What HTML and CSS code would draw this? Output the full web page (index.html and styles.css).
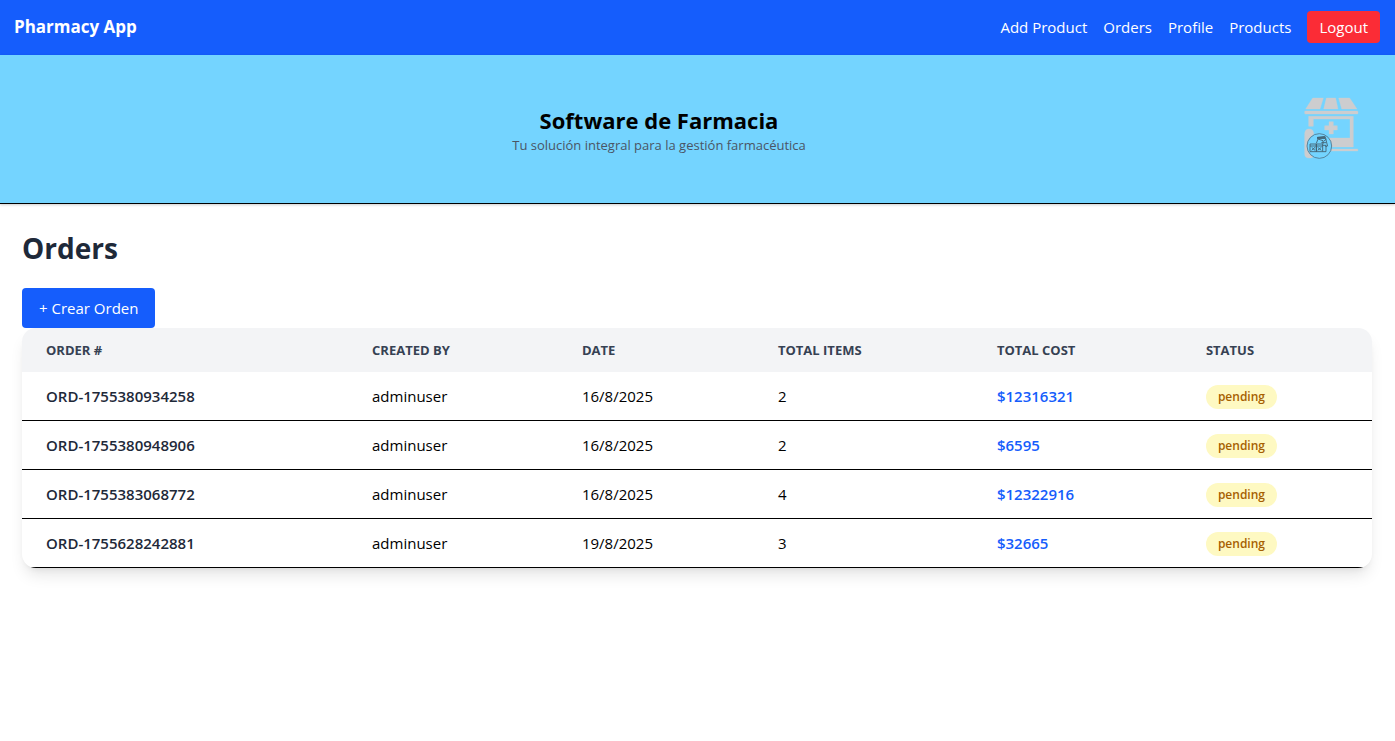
FILE: index.html
```html
<!DOCTYPE html>
<html lang="es">
<head>
<meta charset="utf-8">
<meta name="viewport" content="width=device-width, initial-scale=1">
<title>Pharmacy App</title>
<link rel="stylesheet" href="styles.css">
</head>
<body>
<nav class="navbar">
  <a class="brand" href="#">Pharmacy App</a>
  <div class="nav-links">
    <a href="#">Add Product</a>
    <a href="#">Orders</a>
    <a href="#">Profile</a>
    <a href="#">Products</a>
    <button class="logout" type="button">Logout</button>
  </div>
</nav>
<header class="banner">
  <div class="banner-text">
    <h2>Software de Farmacia</h2>
    <p>Tu solución integral para la gestión farmacéutica</p>
  </div>
  <svg class="logo" viewBox="12 24 207 210" role="img" aria-label="Farmacia">
    <g fill="#cdcdcf" stroke="#cdcdcf" stroke-width="1" stroke-linejoin="round">
      <path d="M68 39H100L90 72H47ZM109 39H137L144 72H101ZM146 39H179L201 72H155Z"/>
      <rect x="44" y="78" width="160" height="9" rx="2"/>
      <path fill-rule="evenodd" d="M56 94H190V186H118V159H180V102H70V124H56Z"/>
      <path d="M117 110H130V122H142V135H130V147H117V135H104V122H117Z"/>
      <rect x="110" y="192" width="94" height="6" rx="2"/>
      <path d="M44 148Q44 132 57 132Q70 132 71 145V148L56 162V200L71 213Q70 219 57 219Q44 219 44 206Z"/>
    </g>
    <circle cx="88" cy="183" r="37" fill="#73d4ff" stroke="#50758a" stroke-width="2.5"/>
    <g fill="none" stroke="#3e5968" stroke-width="2.5">
      <path d="M60 177H79V200H60ZM79 177H98V200H79ZM60 183H98M65 187L75 196M75 187L65 196M83 187L94 196M94 187L83 196"/>
      <path d="M79 175L84 162L99 167V177M98 181H108V200H98M82 157L105 154L108 163L101 169M107 161L113 184M111 184H106M94 173H108"/>
      <path d="M81 159H105" stroke-width="5"/>
    </g>
  </svg>
</header>
<main class="content">
  <h1>Orders</h1>
  <button class="create" type="button">+ Crear Orden</button>
  <div class="card">
    <table class="orders">
      <colgroup><col class="c-order"><col class="c-user"><col class="c-date"><col class="c-items"><col class="c-cost"><col class="c-status"></colgroup>
      <thead>
        <tr><th scope="col">ORDER #</th><th scope="col">CREATED BY</th><th scope="col">DATE</th><th scope="col">TOTAL ITEMS</th><th scope="col">TOTAL COST</th><th scope="col">STATUS</th></tr>
      </thead>
      <tbody>
        <tr><td class="number">ORD-1755380934258</td><td>adminuser</td><td>16/8/2025</td><td>2</td><td class="cost">$12316321</td><td class="status"><span class="badge">pending</span></td></tr>
        <tr><td class="number">ORD-1755380948906</td><td>adminuser</td><td>16/8/2025</td><td>2</td><td class="cost">$6595</td><td class="status"><span class="badge">pending</span></td></tr>
        <tr><td class="number">ORD-1755383068772</td><td>adminuser</td><td>16/8/2025</td><td>4</td><td class="cost">$12322916</td><td class="status"><span class="badge">pending</span></td></tr>
        <tr><td class="number">ORD-1755628242881</td><td>adminuser</td><td>19/8/2025</td><td>3</td><td class="cost">$32665</td><td class="status"><span class="badge">pending</span></td></tr>
      </tbody>
    </table>
  </div>
</main>
</body>
</html>
```
FILE: styles.css
```css
* { box-sizing: border-box; margin: 0; padding: 0; }
body {
  font-family: "Segoe UI", "Open Sans", "Noto Sans", sans-serif;
  font-size: 15px;
  line-height: 24px;
  color: #000;
  background: #fff;
}
a { color: inherit; text-decoration: none; }
button { font: inherit; color: #fff; border: 0; border-radius: 4px; cursor: pointer; }

.navbar {
  display: flex;
  align-items: center;
  justify-content: space-between;
  padding: 11px 15px 12px 14px;
  background: #155dfc;
  color: #fff;
}
.brand { font-size: 17px; font-weight: 700; }
.nav-links { display: flex; align-items: center; gap: 16px; }
.logout { padding: 4px 12px; background: #fb2c36; }

.banner {
  display: flex;
  align-items: center;
  padding: 38px 32px 40px 24px;
  background: #74d4ff;
  border-bottom: 1px solid #000;
  box-shadow: 0 1px 3px rgba(0, 0, 0, .1), 0 1px 2px rgba(0, 0, 0, .1);
}
.banner-text { flex: 1; padding-top: 2px; text-align: center; }
.banner h2 { font-size: 22px; line-height: 32px; font-weight: 700; }
.banner p { font-size: 13px; line-height: 18px; color: #4a5565; }
.logo { width: 69px; height: 70px; flex: none; }

.content { padding: 24px 23px 24px 22px; }
.content h1 {
  margin-bottom: 20px;
  font-size: 28px;
  line-height: 40px;
  font-weight: 700;
  color: #1e2939;
}
.create { display: block; padding: 8px 17px; background: #155dfc; }

.card {
  overflow: hidden;
  border-radius: 14px;
  background: #fff;
  box-shadow: 0 10px 15px -3px rgba(0, 0, 0, .1), 0 4px 6px -4px rgba(0, 0, 0, .1);
}
.orders { width: 100%; table-layout: fixed; border-collapse: separate; border-spacing: 0; }
.c-order { width: 24.15%; }
.c-user { width: 15.55%; }
.c-date { width: 14.52%; }
.c-items { width: 16.22%; }
.c-cost { width: 15.48%; }
.c-status { width: 14.08%; }
.orders th {
  padding: 12px 24px;
  font-size: 13px;
  line-height: 20px;
  font-weight: 700;
  text-align: left;
  color: #364153;
  background: #f3f4f6;
}
.orders td { padding: 12px 24px; border-bottom: 1px solid #000; }
.orders .number { font-weight: 600; color: #1e2939; }
.orders .cost { font-weight: 600; color: #155dfc; }
.orders .status { padding: 13px 24px 11px; }
.badge {
  display: block;
  width: fit-content;
  padding: 4px 12px;
  border-radius: 12px;
  font-size: 12px;
  line-height: 16px;
  font-weight: 600;
  color: #a65f00;
  background: #fef9c2;
}
```
